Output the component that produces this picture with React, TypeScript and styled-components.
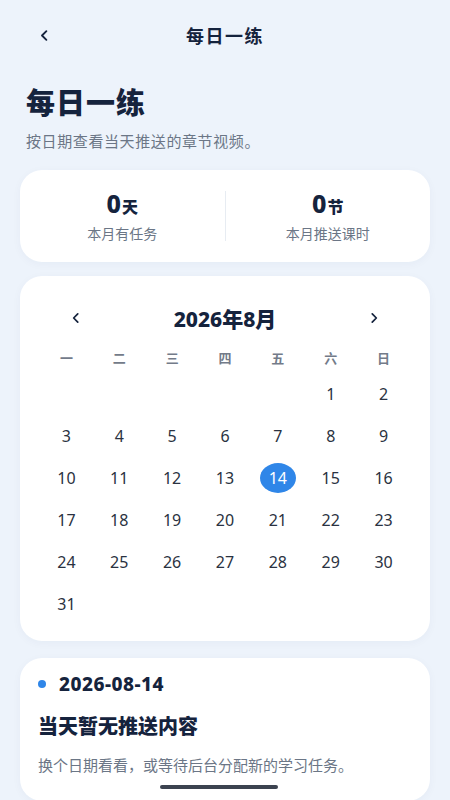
import React from 'react'
import styled, { createGlobalStyle } from 'styled-components'

const GlobalStyle = createGlobalStyle`
  html, body {
    margin: 0;
    padding: 0;
    background: #edf3fb;
  }
  body {
    font-family: "Noto Sans", "Noto Sans CJK SC", sans-serif;
    color: #15233d;
  }
`

const Screen = styled.div`
  width: 450px;
  min-height: 800px;
  box-sizing: border-box;
  padding: 0 20px 40px;
  background: #edf3fb;
`

const NavBar = styled.div`
  height: 70px;
  display: grid;
  grid-template-columns: 44px 1fr 44px;
  align-items: center;
`

const NavTitle = styled.div`
  text-align: center;
  font-size: 18px;
  font-weight: 700;
  letter-spacing: 1.5px;
  color: #15233d;
`

const IconButton = styled.button<{ $align?: 'start' | 'end' | 'center' }>`
  width: 32px;
  height: 32px;
  padding: 0;
  border: none;
  background: transparent;
  display: flex;
  align-items: center;
  justify-content: ${(p) => p.$align ?? 'center'};
  color: #15233d;
  cursor: pointer;
`

const Intro = styled.div`
  padding: 14px 6px 19px;
`

const PageTitle = styled.h1`
  margin: 0;
  font-size: 29px;
  line-height: 38px;
  font-weight: 800;
  letter-spacing: 1px;
  color: #15233d;
`

const PageSub = styled.p`
  margin: 9px 0 0;
  font-size: 15px;
  line-height: 20px;
  letter-spacing: 0.6px;
  color: #6b7686;
`

const Card = styled.div`
  background: #ffffff;
  border-radius: 22px;
  box-shadow: 0 2px 10px rgba(30, 60, 110, 0.04);
`

const StatsCard = styled(Card)`
  height: 92px;
  display: grid;
  grid-template-columns: 1fr 1px 1fr;
  align-items: center;
`

const Divider = styled.div`
  height: 50px;
  background: #e7ecf2;
`

const Stat = styled.div`
  display: flex;
  flex-direction: column;
  align-items: center;
  gap: 5px;
`

const StatValue = styled.div`
  display: flex;
  align-items: baseline;
  font-weight: 800;
  color: #15233d;
  line-height: 26px;
`

const Num = styled.span`
  font-size: 25px;
`

const Unit = styled.span`
  font-size: 16px;
  margin-left: 1px;
`

const StatLabel = styled.div`
  font-size: 14px;
  line-height: 18px;
  color: #6b7686;
`

const CalendarCard = styled(Card)`
  margin-top: 14px;
  padding: 24px 20px 16px;
`

const MonthBar = styled.div`
  height: 36px;
  padding: 0 20px;
  display: flex;
  align-items: center;
  justify-content: space-between;
`

const MonthTitle = styled.div`
  font-size: 21px;
  font-weight: 800;
  color: #15233d;
`

const Week = styled.div`
  margin-top: 10px;
  display: grid;
  grid-template-columns: repeat(7, 1fr);
  height: 22px;
  align-items: center;
`

const WeekDay = styled.div`
  text-align: center;
  font-size: 13px;
  font-weight: 700;
  color: #737b89;
`

const Days = styled.div`
  margin-top: 5px;
  display: grid;
  grid-template-columns: repeat(7, 1fr);
  grid-auto-rows: 42px;
  align-items: center;
  justify-items: center;
`

const Day = styled.div<{ $selected?: boolean }>`
  width: 36px;
  height: 30px;
  border-radius: 50%;
  display: flex;
  align-items: center;
  justify-content: center;
  font-size: 16px;
  color: ${(p) => (p.$selected ? '#ffffff' : '#2a3241')};
  background: ${(p) => (p.$selected ? '#2f86e8' : 'transparent')};
`

const DetailCard = styled(Card)`
  margin-top: 17px;
  padding: 13px 18px 26px;
`

const DateRow = styled.div`
  display: flex;
  align-items: center;
  gap: 13px;
  height: 26px;
`

const Dot = styled.span`
  width: 8px;
  height: 8px;
  border-radius: 50%;
  background: #2f86e8;
`

const DateText = styled.span`
  font-size: 19px;
  font-weight: 800;
  color: #15233d;
  letter-spacing: 0.5px;
`

const EmptyTitle = styled.div`
  margin-top: 17px;
  font-size: 20px;
  line-height: 26px;
  font-weight: 800;
  color: #15233d;
`

const EmptyText = styled.div`
  margin-top: 15px;
  font-size: 15px;
  line-height: 20px;
  color: #6b7686;
`

const HomeIndicator = styled.div`
  position: fixed;
  left: 160px;
  bottom: 11px;
  width: 118px;
  height: 4px;
  border-radius: 2px;
  background: #3c4350;
`

const Chevron: React.FC<{ dir: 'left' | 'right'; size?: number }> = ({ dir, size = 14 }) => (
  <svg width={size} height={size} viewBox="0 0 24 24" fill="none" stroke="currentColor" strokeWidth={3} strokeLinecap="round" strokeLinejoin="round">
    {dir === 'left' ? <path d="M15 5 8 12l7 7" /> : <path d="m9 5 7 7-7 7" />}
  </svg>
)

const weekdays = ['一', '二', '三', '四', '五', '六', '日']

// August 2026 starts on a Saturday
const leading = 5
const daysInMonth = 31
const selectedDay = 14

const App: React.FC = () => {
  const cells: (number | null)[] = [
    ...Array.from({ length: leading }, () => null),
    ...Array.from({ length: daysInMonth }, (_, i) => i + 1),
  ]

  return (
    <>
      <GlobalStyle />
      <Screen>
        <NavBar>
          <IconButton $align="end">
            <Chevron dir="left" size={15} />
          </IconButton>
          <NavTitle>每日一练</NavTitle>
          <span />
        </NavBar>

        <Intro>
          <PageTitle>每日一练</PageTitle>
          <PageSub>按日期查看当天推送的章节视频。</PageSub>
        </Intro>

        <StatsCard>
          <Stat>
            <StatValue>
              <Num>0</Num>
              <Unit>天</Unit>
            </StatValue>
            <StatLabel>本月有任务</StatLabel>
          </Stat>
          <Divider />
          <Stat>
            <StatValue>
              <Num>0</Num>
              <Unit>节</Unit>
            </StatValue>
            <StatLabel>本月推送课时</StatLabel>
          </Stat>
        </StatsCard>

        <CalendarCard>
          <MonthBar>
            <IconButton>
              <Chevron dir="left" />
            </IconButton>
            <MonthTitle>2026年8月</MonthTitle>
            <IconButton>
              <Chevron dir="right" />
            </IconButton>
          </MonthBar>
          <Week>
            {weekdays.map((w) => (
              <WeekDay key={w}>{w}</WeekDay>
            ))}
          </Week>
          <Days>
            {cells.map((d, i) =>
              d === null ? <span key={`e${i}`} /> : <Day key={d} $selected={d === selectedDay}>{d}</Day>
            )}
          </Days>
        </CalendarCard>

        <DetailCard>
          <DateRow>
            <Dot />
            <DateText>2026-08-14</DateText>
          </DateRow>
          <EmptyTitle>当天暂无推送内容</EmptyTitle>
          <EmptyText>换个日期看看，或等待后台分配新的学习任务。</EmptyText>
        </DetailCard>
      </Screen>
      <HomeIndicator />
    </>
  )
}

export default App
